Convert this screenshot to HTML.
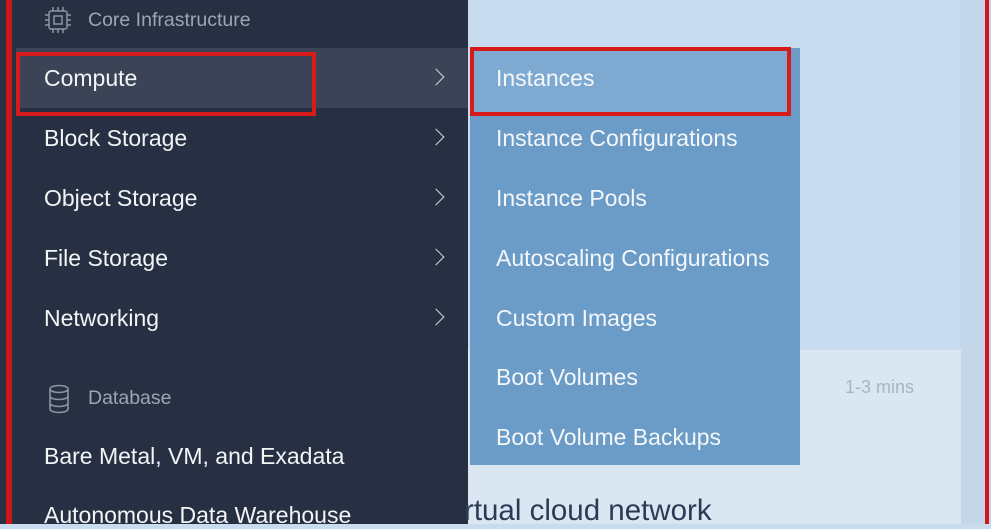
<html><head><style>
body{margin:0;width:991px;height:524px;overflow:hidden;background:#c9dbee;font-family:"Liberation Sans",sans-serif;position:relative}
div{position:absolute;box-sizing:border-box;white-space:nowrap}
.t{color:#f2f4f6;font-size:23px;left:44px}
.h{color:#9ba5b3;font-size:19.5px;left:88px}
.s{color:#f4f7fa;font-size:23px;left:496px}
.ch{position:absolute;left:430px;width:11px;height:11px;border-right:1.6px solid #d0d5dc;border-top:1.6px solid #d0d5dc;transform:rotate(45deg)}
</style></head><body>
<div style="left:0;top:0;width:468px;height:524px;background:#273042"></div>
<div style="left:960px;top:0;width:31px;height:524px;background:#c3d6ea"></div>
<div style="left:468px;top:350px;width:493px;height:174px;background:#dae7f3"></div>
<div style="left:16px;top:48px;width:452px;height:60px;background:#3a4456"></div>
<div style="left:16px;top:52px;width:300px;height:64px;border:4px solid #d71a1a;"></div>
<div style="left:6px;top:0;width:6px;height:524px;background:#c8161a"></div>
<div style="left:985px;top:0;width:4px;height:524px;background:#d01818"></div>
<svg style="position:absolute;left:44px;top:6px" width="28" height="28" viewBox="0 0 28 28" fill="none" stroke="#8a95a3" stroke-width="1.5"><rect x="5" y="5" width="18" height="18" rx="2"/><rect x="10" y="10" width="8" height="8"/><path d="M9 1v4M14 1v4M19 1v4M9 23v4M14 23v4M19 23v4M1 9h4M1 14h4M1 19h4M23 9h4M23 14h4M23 19h4"/></svg>
<div class="h" style="top:9px">Core Infrastructure</div>
<div class="t" style="top:65px">Compute</div>
<div class="t" style="top:125px">Block Storage</div>
<div class="t" style="top:185px">Object Storage</div>
<div class="t" style="top:245px">File Storage</div>
<div class="t" style="top:305px">Networking</div>
<span class="ch" style="top:71px"></span><span class="ch" style="top:131px"></span><span class="ch" style="top:191px"></span><span class="ch" style="top:251px"></span><span class="ch" style="top:311px"></span>
<svg style="position:absolute;left:48px;top:384px" width="22" height="30" viewBox="0 0 22 30" fill="none" stroke="#8a95a3" stroke-width="1.6"><ellipse cx="11" cy="5" rx="9" ry="3.5"/><path d="M2 5v20c0 2 4 3.5 9 3.5s9-1.5 9-3.5V5M2 12c0 2 4 3.5 9 3.5s9-1.5 9-3.5M2 19c0 2 4 3.5 9 3.5s9-1.5 9-3.5"/></svg>
<div class="h" style="top:387px">Database</div>
<div class="t" style="top:443px">Bare Metal, VM, and Exadata</div>
<div class="t" style="top:502px">Autonomous Data Warehouse</div>
<div style="left:470px;top:48px;width:330px;height:417px;background:#6b9bc7"></div>
<div style="left:470px;top:48px;width:320px;height:66px;background:#7eaad2"></div>
<div style="left:470px;top:47px;width:321px;height:69px;border:4px solid #d71a1a"></div>
<div class="s" style="top:65px">Instances</div>
<div class="s" style="top:125px">Instance Configurations</div>
<div class="s" style="top:185px">Instance Pools</div>
<div class="s" style="top:245px">Autoscaling Configurations</div>
<div class="s" style="top:305px">Custom Images</div>
<div class="s" style="top:364px">Boot Volumes</div>
<div class="s" style="top:424px">Boot Volume Backups</div>
<div style="left:845px;top:377px;color:#a8b4c2;font-size:18px">1-3 mins</div>
<div style="left:464px;top:494px;color:#2c3a55;font-size:29.5px">rtual cloud network</div>
</body></html>
